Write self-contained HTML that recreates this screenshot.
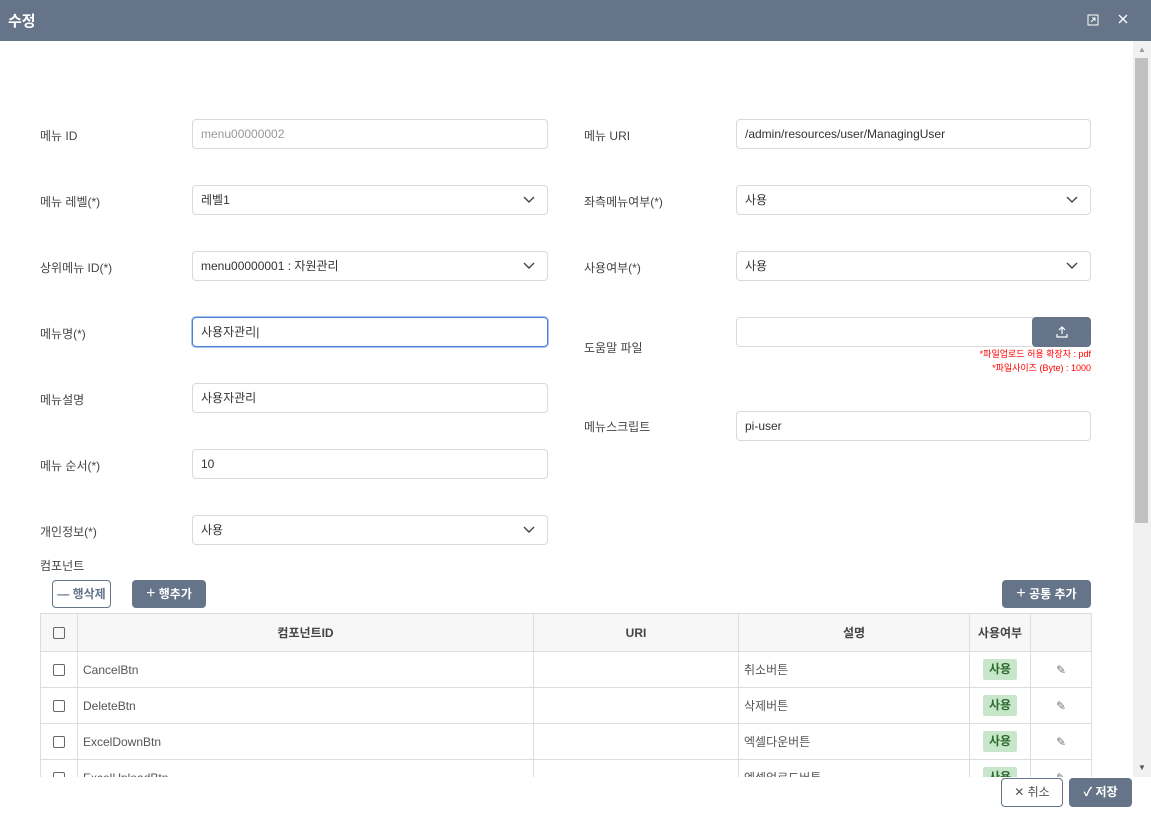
<!DOCTYPE html>
<html><head><meta charset="utf-8"><style>
*{box-sizing:border-box;margin:0;padding:0}
body{width:1151px;height:825px;position:relative;background:#fff;font-family:"Liberation Sans","Noto Sans CJK KR",sans-serif;font-size:12px;color:#333;overflow:hidden}
.hd{position:absolute;left:0;top:0;width:1151px;height:41px;background:#657489;color:#fff}
.hd .t{position:absolute;left:8px;top:10px;font-size:15px;font-weight:bold}
.lbl{position:absolute;font-size:12px;color:#444}
.inp{position:absolute;height:30px;border:1px solid #d9d9de;border-radius:4px;padding:0 8px;line-height:28px;font-size:12px;color:#333;background:#fff}
.inp svg{position:absolute;right:12px;top:10px}
.btn{position:absolute;height:28px;border-radius:4px;font-size:12px;font-weight:bold;line-height:28px;text-align:center}
.dark{background:#657489;color:#fff}
.out{border:1px solid #657489;color:#657489;background:#fff;line-height:26px}
.clip{position:absolute;left:0;top:41px;width:1133px;height:736px;overflow:hidden}
table{position:absolute;left:40px;top:572px;border-collapse:collapse;width:1051px;table-layout:fixed}
td,th{border:1px solid #ddd;height:36px;font-size:12px;padding:0 5px;color:#555;font-weight:normal}
th{background:#f7f7f7;height:38px;font-weight:bold;color:#444}
.cb{display:inline-block;width:12px;height:12px;border:1px solid #666;border-radius:2px;vertical-align:middle}
.tag{display:inline-block;background:#c8e6c9;color:#2e6b30;font-weight:bold;padding:0 6px;height:21px;line-height:21px;border-radius:2px}
</style></head><body>
<div class="hd"><div class="t">수정</div>
<svg style="position:absolute;left:1087px;top:14px" width="12" height="12" viewBox="0 0 12 12" fill="none" stroke="#fff" stroke-width="1"><rect x="1" y="1" width="10" height="10"/><path d="M4 8L8 4M5 4h3v3"/></svg>
<svg style="position:absolute;left:1118px;top:14px" width="10" height="10" viewBox="0 0 10 10" stroke="#fff" stroke-width="1.3"><path d="M1 1L9 9M9 1L1 9"/></svg>
</div>
<div style="position:absolute;left:1133px;top:41px;width:18px;height:736px;background:#f1f1f1"></div>
<div style="position:absolute;left:1135px;top:58px;width:13px;height:465px;background:#c1c1c1"></div>
<div style="position:absolute;left:1138px;top:45px;font-size:8px;color:#999">▲</div>
<div style="position:absolute;left:1138px;top:763px;font-size:8px;color:#555">▼</div>
<div class="clip">
<div class="lbl" style="left:40px;top:86px">메뉴 ID</div>
<div class="inp" style="left:192px;top:78px;width:356px;color:#999">menu00000002</div>
<div class="lbl" style="left:584px;top:86px">메뉴 URI</div>
<div class="inp" style="left:736px;top:78px;width:355px">/admin/resources/user/ManagingUser</div>

<div class="lbl" style="left:40px;top:152px">메뉴 레벨(*)</div>
<div class="inp" style="left:192px;top:144px;width:356px">레벨1<svg width="12" height="8" viewBox="0 0 12 8" fill="none" stroke="#444" stroke-width="1.4"><path d="M1 1l5 5 5-5"/></svg></div>
<div class="lbl" style="left:584px;top:152px">좌측메뉴여부(*)</div>
<div class="inp" style="left:736px;top:144px;width:355px">사용<svg width="12" height="8" viewBox="0 0 12 8" fill="none" stroke="#444" stroke-width="1.4"><path d="M1 1l5 5 5-5"/></svg></div>

<div class="lbl" style="left:40px;top:218px">상위메뉴 ID(*)</div>
<div class="inp" style="left:192px;top:210px;width:356px">menu00000001 : 자원관리<svg width="12" height="8" viewBox="0 0 12 8" fill="none" stroke="#444" stroke-width="1.4"><path d="M1 1l5 5 5-5"/></svg></div>
<div class="lbl" style="left:584px;top:218px">사용여부(*)</div>
<div class="inp" style="left:736px;top:210px;width:355px">사용<svg width="12" height="8" viewBox="0 0 12 8" fill="none" stroke="#444" stroke-width="1.4"><path d="M1 1l5 5 5-5"/></svg></div>

<div class="lbl" style="left:40px;top:284px">메뉴명(*)</div>
<div class="inp" style="left:192px;top:276px;width:356px;border-color:#4a7fd6;box-shadow:0 0 0 1px #aac4ee">사용자관리|</div>
<div class="lbl" style="left:584px;top:298px">도움말 파일</div>
<div class="inp" style="left:736px;top:276px;width:300px"></div>
<div class="btn dark" style="left:1032px;top:276px;width:59px;height:30px"><svg width="12" height="12" viewBox="0 0 12 12" fill="none" stroke="#fff" stroke-width="1.2" style="margin-top:9px"><path d="M6 8V1M3 4l3-3 3 3M1 8v3h10V8"/></svg></div>
<div style="position:absolute;right:42px;top:306px;font-size:9px;color:#f00;text-align:right;line-height:14px;width:300px">*파일업로드 허용 확장자 : pdf<br>*파일사이즈 (Byte) : 1000</div>

<div class="lbl" style="left:40px;top:350px">메뉴설명</div>
<div class="inp" style="left:192px;top:342px;width:356px">사용자관리</div>
<div class="lbl" style="left:584px;top:377px">메뉴스크립트</div>
<div class="inp" style="left:736px;top:370px;width:355px">pi-user</div>

<div class="lbl" style="left:40px;top:416px">메뉴 순서(*)</div>
<div class="inp" style="left:192px;top:408px;width:356px">10</div>
<div class="lbl" style="left:40px;top:482px">개인정보(*)</div>
<div class="inp" style="left:192px;top:474px;width:356px">사용<svg width="12" height="8" viewBox="0 0 12 8" fill="none" stroke="#444" stroke-width="1.4"><path d="M1 1l5 5 5-5"/></svg></div>

<div class="lbl" style="left:40px;top:516px">컴포넌트</div>
<div class="btn out" style="left:52px;top:539px;width:59px">— 행삭제</div>
<div class="btn dark" style="left:132px;top:539px;width:74px"><span style="font-size:16px;font-weight:normal">+</span> 행추가</div>
<div class="btn dark" style="left:1002px;top:539px;width:89px"><span style="font-size:16px;font-weight:normal">+</span> 공통 추가</div>
<table>
<colgroup><col style="width:37px"><col style="width:456px"><col style="width:205px"><col style="width:231px"><col style="width:61px"><col style="width:61px"></colgroup>
<tr><th style="text-align:center"><span class="cb"></span></th><th>컴포넌트ID</th><th>URI</th><th>설명</th><th>사용여부</th><th></th></tr>
<tr><td style="text-align:center"><span class="cb"></span></td><td>CancelBtn</td><td></td><td>취소버튼</td><td style="text-align:center"><span class="tag">사용</span></td><td style="text-align:center;color:#777">✎</td></tr>
<tr><td style="text-align:center"><span class="cb"></span></td><td>DeleteBtn</td><td></td><td>삭제버튼</td><td style="text-align:center"><span class="tag">사용</span></td><td style="text-align:center;color:#777">✎</td></tr>
<tr><td style="text-align:center"><span class="cb"></span></td><td>ExcelDownBtn</td><td></td><td>엑셀다운버튼</td><td style="text-align:center"><span class="tag">사용</span></td><td style="text-align:center;color:#777">✎</td></tr>
<tr><td style="text-align:center"><span class="cb"></span></td><td>ExcelUploadBtn</td><td></td><td>엑셀업로드버튼</td><td style="text-align:center"><span class="tag">사용</span></td><td style="text-align:center;color:#777">✎</td></tr>
</table>
</div>
<div class="btn out" style="left:1001px;top:778px;width:62px;height:29px;font-weight:normal;color:#555">✕ 취소</div>
<div class="btn dark" style="left:1069px;top:778px;width:63px;height:29px">✓ 저장</div>
</body></html>
